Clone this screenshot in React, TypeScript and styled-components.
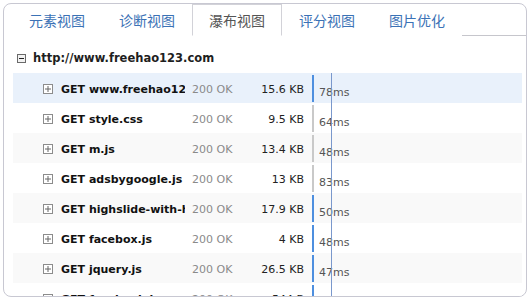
import React from 'react'
import styled, { createGlobalStyle } from 'styled-components'

const GlobalStyle = createGlobalStyle`
  html, body {
    margin: 0;
    padding: 0;
    background: #ffffff;
  }
  body {
    font-family: 'DejaVu Sans', Verdana, sans-serif;
  }
`

interface RequestRow {
  name: string
  status: string
  size: string
  time: string
  cached: boolean
}

const rows: RequestRow[] = [
  { name: 'GET www.freehao123.com', status: '200 OK', size: '15.6 KB', time: '78ms', cached: false },
  { name: 'GET style.css', status: '200 OK', size: '9.5 KB', time: '64ms', cached: true },
  { name: 'GET m.js', status: '200 OK', size: '13.4 KB', time: '48ms', cached: true },
  { name: 'GET adsbygoogle.js', status: '200 OK', size: '13 KB', time: '83ms', cached: true },
  { name: 'GET highslide-with-html.js', status: '200 OK', size: '17.9 KB', time: '50ms', cached: false },
  { name: 'GET facebox.js', status: '200 OK', size: '4 KB', time: '48ms', cached: false },
  { name: 'GET jquery.js', status: '200 OK', size: '26.5 KB', time: '47ms', cached: false },
  { name: 'GET facebook.js', status: '200 OK', size: '544 B', time: '39ms', cached: false },
]

const tabs = ['元素视图', '诊断视图', '瀑布视图', '评分视图', '图片优化']

const Panel = styled.div`
  margin: 3px;
  width: 522px;
  height: 292px;
  border: 1px solid #c8c8d2;
  border-radius: 8px;
  overflow: hidden;
  background: #fff;
`

const TabBar = styled.div`
  display: flex;
  margin-left: 8px;
  height: 31px;
  border-bottom: 1px solid #c6c6cc;
`

const Tab = styled.div<{ $active?: boolean }>`
  width: 90px;
  box-sizing: border-box;
  height: 32px;
  margin-bottom: -1px;
  display: flex;
  align-items: center;
  justify-content: center;
  font-family: 'Noto Sans CJK SC', sans-serif;
  font-size: 14px;
  color: ${p => (p.$active ? '#555' : '#3b72b6')};
  background: #fff;
  border: 1px solid ${p => (p.$active ? '#d2d2d8' : 'transparent')};
  border-bottom-color: ${p => (p.$active ? '#fff' : 'transparent')};
`

const TreeHeader = styled.div`
  display: flex;
  align-items: center;
  gap: 7px;
  padding: 14px 0 7px 13px;
  height: 16px;
  font-size: 11.5px;
  font-weight: bold;
  color: #1e1e1e;
`

const RowList = styled.div`
  position: relative;
  margin-left: 9px;
  margin-right: 4px;
`

// time marker drawn over the rows
const TimeLine = styled.div`
  position: absolute;
  top: 0;
  bottom: -20px;
  left: 318px;
  width: 1px;
  background: #7a98cc;
`

const Row = styled.div<{ $selected?: boolean; $alt?: boolean }>`
  display: flex;
  align-items: center;
  height: 30px;
  padding: 2px 0 0 30px;
  box-sizing: border-box;
  background: ${p => (p.$selected ? '#e9f1fb' : p.$alt ? '#f9f9f9' : '#fff')};
  font-size: 11px;
`

const Name = styled.div`
  width: 124px;
  margin-left: 8px;
  overflow: hidden;
  white-space: nowrap;
  font-weight: bold;
  color: #111;
`

const Status = styled.div`
  width: 50px;
  margin-left: 7px;
  color: #8a8a8a;
`

const Size = styled.div`
  width: 62px;
  text-align: right;
  color: #222;
`

const Bar = styled.div<{ $cached?: boolean }>`
  align-self: flex-start;
  width: 2px;
  height: 27px;
  margin: 0 0 0 8px;
  background: ${p => (p.$cached ? '#c9c9c9' : '#4e8fdf')};
`

const Time = styled.div`
  margin: 6px 0 0 5px;
  color: #555;
`

function ExpandIcon({ open }: { open?: boolean }) {
  if (open) {
    return (
      <svg width="9" height="9" viewBox="0 0 9 9">
        <rect x="0.5" y="0.5" width="8" height="8" fill="#f2f2f2" stroke="#6a6a6a" />
        <line x1="2" y1="4.5" x2="7" y2="4.5" stroke="#222" />
      </svg>
    )
  }
  return (
    <svg width="10" height="10" viewBox="0 0 10 10">
      <rect x="0.5" y="0.5" width="9" height="9" fill="#fff" stroke="#8c8c8c" />
      <line x1="2" y1="5" x2="8" y2="5" stroke="#666" />
      <line x1="5" y1="2" x2="5" y2="8" stroke="#666" />
    </svg>
  )
}

export default function App() {
  return (
    <>
      <GlobalStyle />
      <Panel>
        <TabBar>
          {tabs.map(t => (
            <Tab key={t} $active={t === '瀑布视图'}>
              {t}
            </Tab>
          ))}
        </TabBar>
        <TreeHeader>
          <ExpandIcon open />
          http://www.freehao123.com
        </TreeHeader>
        <RowList>
          {rows.map((r, i) => (
            <Row key={r.name} $selected={i === 0} $alt={i > 0 && i % 2 === 0}>
              <ExpandIcon />
              <Name>{r.name}</Name>
              <Status>{r.status}</Status>
              <Size>{r.size}</Size>
              <Bar $cached={r.cached} />
              <Time>{r.time}</Time>
            </Row>
          ))}
          <TimeLine />
        </RowList>
      </Panel>
    </>
  )
}
